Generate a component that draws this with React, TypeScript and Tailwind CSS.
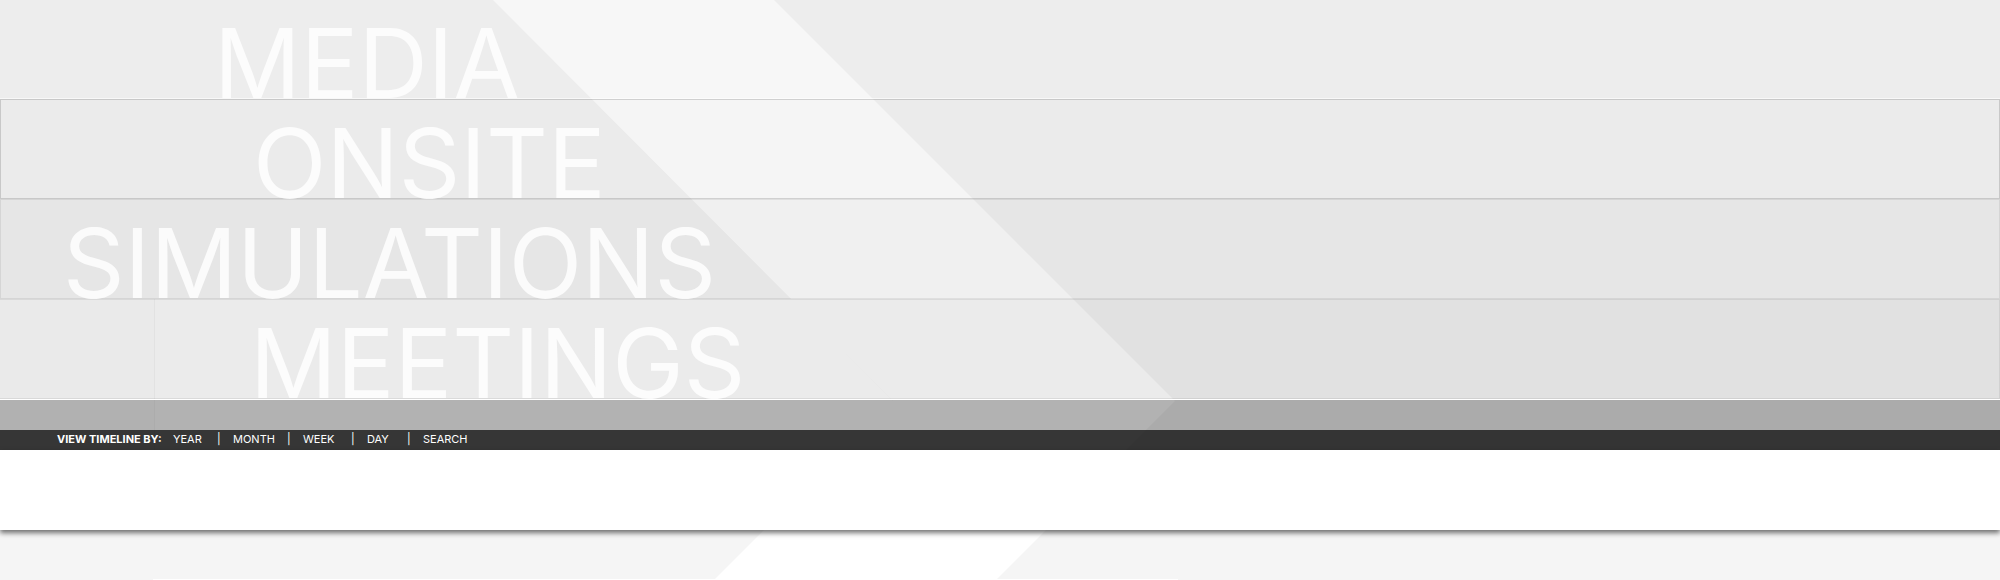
const rows = [
  { label: "MEDIA", row: "h-[99px] bg-black/3 border-b border-b-white/60", pad: "pl-[214px]" },
  { label: "ONSITE", row: "h-[100px] bg-black/4 border border-black/15", pad: "pl-[252px]" },
  { label: "SIMULATIONS", row: "h-[100px] bg-black/6 border border-black/7", pad: "pl-[62px]" },
  { label: "MEETINGS", row: "h-[100px] bg-black/8 border-y border-r border-black/7", pad: "pl-[250px]" },
];

const periods = [
  { label: "YEAR", width: "w-[44px]" },
  { label: "MONTH", width: "w-[54px]" },
  { label: "WEEK", width: "w-[48px]" },
  { label: "DAY", width: "w-[40px]" },
  { label: "SEARCH", width: "w-[60px]" },
];

function Backdrop() {
  return (
    <svg className="absolute left-0 top-0 -z-10" width="1200" height="580" viewBox="0 0 1200 580" aria-hidden="true">
      <path d="M493 0H774L1175 401L996 580H714L893 401Z" fill="#fff" />
      <path d="M0 299H792L893 401L900 450H0Z" fill="#fff" />
      <path d="M0 299H155V450H0Z" fill="#000" fillOpacity="0.004" />
      <path d="M154 299H155V450H154Z" fill="#000" fillOpacity="0.03" />
    </svg>
  );
}

export default function App() {
  return (
    <div className="relative isolate min-h-screen overflow-hidden bg-[#f5f5f5] font-['Inter',sans-serif]">
      <Backdrop />
      <main>
        {rows.map((r) => (
          <section key={r.label} className={r.row}>
            <h2 className={`pt-[25px] text-[96px] leading-[76px] font-normal whitespace-nowrap text-white/85 ${r.pad}`}>{r.label}</h2>
          </section>
        ))}
        <div className="h-[31px] border-t border-t-white bg-black/30 bg-clip-padding" />
        <nav className="flex h-5 items-start bg-black/79 pl-[57px] text-[11px] leading-[18px] text-white" aria-label="Timeline">
          <span className="w-[116px] font-bold whitespace-nowrap">VIEW TIMELINE BY:</span>
          {periods.map((p, i) => (
            <div key={p.label} className="flex">
              {i > 0 && <span className="w-4">|</span>}
              <a href="#" className={p.width}>{p.label}</a>
            </div>
          ))}
        </nav>
        <div className="h-20 bg-white shadow-[0_3px_5px_rgba(0,0,0,0.55)]" />
        <div className="mt-[49px] ml-[153px] h-px w-[1025px] bg-white" />
      </main>
    </div>
  );
}
